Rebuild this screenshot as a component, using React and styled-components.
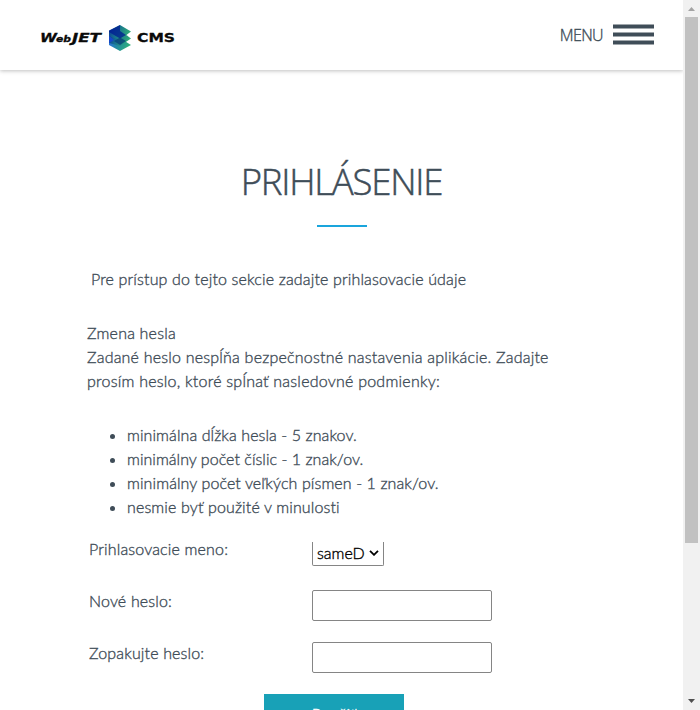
import React from "react";
import styled, { createGlobalStyle } from "styled-components";

const Global = createGlobalStyle`
  * { box-sizing: border-box; }
  html, body { margin: 0; background: #fff; overflow: hidden; }
  body {
    font-family: Lato, "Open Sans", sans-serif; font-size: 16px; font-weight: 300; line-height: 24px;
    color: #3f4d58; -webkit-text-stroke: 0.35px currentColor;
  }
`;
const Window = styled.div`
  display: flex; width: 700px; height: 710px; overflow: hidden;
`;
const Page = styled.div`
  width: 683px; height: 710px; overflow: hidden;
`;
const Header = styled.header`
  display: flex; align-items: center; justify-content: space-between;
  height: 70px; padding: 0 29px 0 40px;
  box-shadow: 0 1px 4px rgba(0, 0, 0, 0.25);
`;
const LogoArt = styled.svg`
  display: block; width: 136px; height: 30px; margin-top: 6px;
  text { font-family: "DejaVu Sans", sans-serif; font-weight: 700; fill: #0a0a0a; stroke: #0a0a0a; stroke-width: 0.3px; stroke-linejoin: round; }
`;
const MenuButton = styled.div`
  display: flex; align-items: center; gap: 10px; font-family: "Open Sans", sans-serif;
`;
const Bars = styled.div`
  display: flex; flex-direction: column; gap: 3px; width: 41px; margin-bottom: 1px;
`;
const Bar = styled.div`
  height: 5px; background: #3f4d58;
  border: solid #9fa6ab; border-width: 1px 0;
`;
const Line = styled.span`
  display: block; white-space: nowrap; letter-spacing: ${(p) => p.$ls || 0}px;
`;
const Title = styled.h1`
  margin: 86px 0 0; height: 50px; font-family: "Open Sans", sans-serif; font-size: 36.5px; line-height: 50px;
  font-weight: 300; text-align: center; -webkit-text-stroke-width: 0.5px;
`;
const Rule = styled.div`
  width: 50px; height: 2px; margin: 19px auto 0; background: #1aa5dc;
`;
const Text = styled.div`
  margin: ${(p) => p.$top}px 0 0 ${(p) => p.$left}px;
`;
const List = styled.ul`
  margin: 30px 0 0 87px; padding: 0 0 0 40px;
`;
const Form = styled.div`
  display: grid; grid-template-columns: 223px 180px; grid-auto-rows: 52px;
  margin: 18px 0 0 89px;
`;
const Select = styled.div`
  display: flex; align-items: center; justify-content: space-between;
  width: 72px; height: 24px; margin-top: 5px; padding: 0 4px 1px;
  border: 1px solid #858585; border-top: 0; border-radius: 0 0 2px 2px; color: #000;
`;
const Input = styled.input`
  display: block; width: 180px; height: 31px; margin: 1px 0 0; border: 1px solid #858585; border-radius: 2px; outline: 0;
`;
const Submit = styled.button`
  display: block; width: 140px; height: 40px; margin: 1px 0 0 264px; padding: 0;
  border: 0; background: #18a1b7; color: #fff; font: inherit; letter-spacing: 0.3px;
`;
const Scrollbar = styled.div`
  display: flex; flex-direction: column; align-items: center;
  width: 17px; height: 710px; background: #f1f1f1;
`;
const Arrow = styled.svg`
  display: block; width: 17px; height: 17px; flex: none;
`;
const Thumb = styled.div`
  width: 13px; height: 526px; margin-bottom: auto; background: #c1c1c1;
`;

function Logo() {
  return (
    <LogoArt viewBox="0 0 136 30">
      <defs>
        <linearGradient id="layer" x1="0" x2="1" y1="0" y2="0.3">
          <stop offset="0" stopColor="#0b2f9c" />
          <stop offset="0.45" stopColor="#16708f" />
          <stop offset="1" stopColor="#2fac78" />
        </linearGradient>
        <linearGradient id="base" x1="0" x2="1" y1="0" y2="0.3">
          <stop offset="0" stopColor="#2b6de8" />
          <stop offset="0.5" stopColor="#218aa2" />
          <stop offset="1" stopColor="#2fae7b" />
        </linearGradient>
      </defs>
      <text x="0" y="19" fontSize="12.8" fontStyle="oblique" textLength="17" lengthAdjust="spacingAndGlyphs">W</text>
      <text x="16" y="19" fontSize="9" fontStyle="oblique" textLength="15" lengthAdjust="spacingAndGlyphs">eb</text>
      <text x="32" y="19" fontSize="12.8" fontStyle="oblique" textLength="29" lengthAdjust="spacingAndGlyphs">JET</text>
      <path d="M69 17.5V22L80 28L91 22L87 19.5L80 15Z" fill="url(#base)" />
      <path d="M69 11V20L80 23L91 15.5L87 12.5L80 9Z" fill="url(#layer)" />
      <path d="M69 7.5V13L80 17L91 8.5L80 2Z" fill="url(#layer)" />
      <path d="M69 8L80 2V8L86 12L80 15.5L69 9Z" fill="#001b92" opacity="0.75" />
      <path d="M74 18L80 14.5L86 18L80 22Z" fill="#073e79" opacity="0.75" />
      <path d="M69 13L74 17L69 20Z" fill="#1647c9" />
      <text x="97" y="19" fontSize="12.8" textLength="38" lengthAdjust="spacingAndGlyphs">CMS</text>
    </LogoArt>
  );
}

export default function App() {
  return (
    <Window>
      <Global />
      <Page>
        <Header>
          <Logo />
          <MenuButton><Line $ls={-0.6}>MENU</Line><Bars><Bar /><Bar /><Bar /></Bars></MenuButton>
        </Header>
        <Title><Line $ls={-1.2}>PRIHLÁSENIE</Line></Title>
        <Rule />
        <Text $top={40} $left={91}><Line $ls={0.15}>Pre prístup do tejto sekcie zadajte prihlasovacie údaje</Line></Text>
        <Text $top={30} $left={87}>
          <Line $ls={0.2}>Zmena hesla</Line>
          <Line $ls={0.21}>Zadané heslo nespĺňa bezpečnostné nastavenia aplikácie. Zadajte</Line>
          <Line $ls={0.23}>prosím heslo, ktoré spĺnať nasledovné podmienky:</Line>
        </Text>
        <List>
          <li><Line $ls={0.08}>minimálna dĺžka hesla - 5 znakov.</Line></li>
          <li><Line $ls={0.03}>minimálny počet číslic - 1 znak/ov.</Line></li>
          <li><Line $ls={0.09}>minimálny počet veľkých písmen - 1 znak/ov.</Line></li>
          <li><Line $ls={0.13}>nesmie byť použité v minulosti</Line></li>
        </List>
        <Form>
          <Line $ls={0.16}>Prihlasovacie meno:</Line>
          <Select>
            <Line>sameD</Line>
            <svg width="10" height="6" viewBox="0 0 10 6"><path d="M1 0.8L5 4.8L9 0.8" fill="none" stroke="#000" strokeWidth="1.8" /></svg>
          </Select>
          <Line $ls={0.16}>Nové heslo:</Line><Input />
          <Line $ls={0.14}>Zopakujte heslo:</Line><Input />
        </Form>
        <Submit>Použiť</Submit>
      </Page>
      <Scrollbar>
        <Arrow viewBox="0 0 17 17"><path d="M5 11L8.5 7L12 11Z" fill="#a3a3a3" /></Arrow>
        <Thumb />
        <Arrow viewBox="0 0 17 17"><path d="M5 6L8.5 10L12 6Z" fill="#505050" /></Arrow>
      </Scrollbar>
    </Window>
  );
}
